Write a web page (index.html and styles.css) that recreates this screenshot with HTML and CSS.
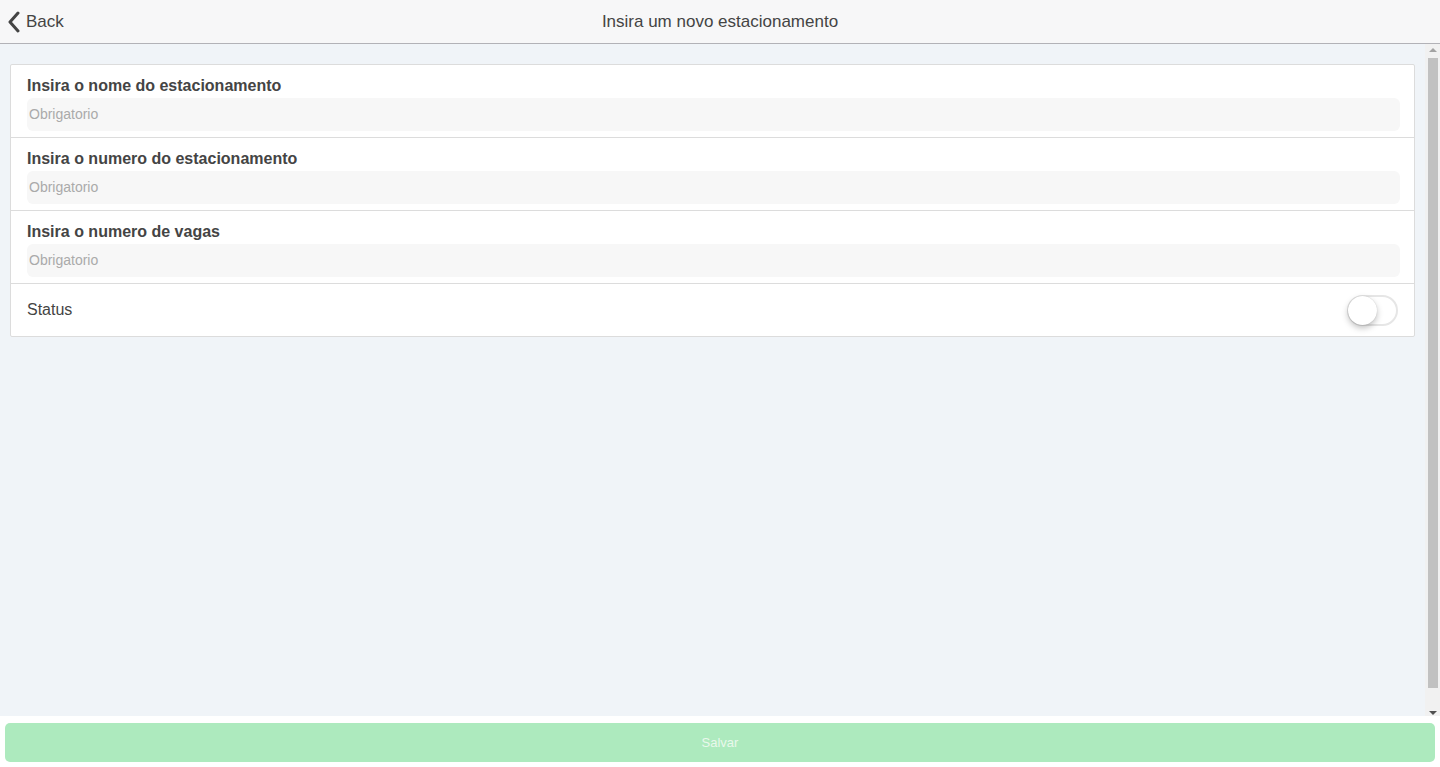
FILE: index.html
```html
<!DOCTYPE html>
<html lang="pt">
<head>
<meta charset="utf-8">
<title>Insira um novo estacionamento</title>
<link rel="stylesheet" href="styles.css">
</head>
<body>
<div class="app">
  <header class="topbar">
    <a class="back" href="#">
      <svg class="back-icon" width="14" height="22" viewBox="0 0 14 22"><path d="M11 2 L3 11 L11 20" fill="none" stroke="#444" stroke-width="3" stroke-linecap="round" stroke-linejoin="round"/></svg>
      <span>Back</span>
    </a>
    <h1 class="title">Insira um novo estacionamento</h1>
  </header>
  <div class="body-row">
    <main class="content">
      <div class="card">
        <div class="field">
          <label class="label">Insira o nome do estacionamento</label>
          <input class="input" type="text" placeholder="Obrigatorio">
        </div>
        <div class="field">
          <label class="label">Insira o numero do estacionamento</label>
          <input class="input" type="text" placeholder="Obrigatorio">
        </div>
        <div class="field">
          <label class="label">Insira o numero de vagas</label>
          <input class="input" type="text" placeholder="Obrigatorio">
        </div>
        <div class="status-row">
          <span class="status-label">Status</span>
          <span class="toggle"><span class="knob"></span></span>
        </div>
      </div>
    </main>
    <div class="scrollbar" aria-hidden="true">
      <span class="arrow-up"></span>
      <span class="thumb"></span>
      <span class="arrow-down"></span>
    </div>
  </div>
  <footer class="footer">
    <button class="save" type="button">Salvar</button>
  </footer>
</div>
</body>
</html>
```
FILE: styles.css
```css
* { box-sizing: border-box; }
html, body { margin: 0; padding: 0; height: 100%; }
body {
  font-family: "Liberation Sans", Arial, sans-serif;
  color: #444;
  background: #fff;
  overflow: hidden;
}
.app {
  display: flex;
  flex-direction: column;
  height: 767px;
}
.topbar {
  flex: 0 0 44px;
  height: 44px;
  background: #f7f7f8;
  border-bottom: 1px solid #b2b2b7;
  display: flex;
  align-items: center;
  justify-content: center;
  position: relative;
}
.back {
  position: absolute;
  left: 7px;
  top: 11px;
  display: flex;
  align-items: center;
  gap: 5px;
  text-decoration: none;
  color: #444;
  font-size: 17px;
}
.back-icon { display: block; }
.title {
  margin: 0;
  font-size: 17px;
  font-weight: normal;
  color: #444;
}
.body-row {
  flex: 1 1 auto;
  display: flex;
  background: #f0f4f8;
  min-height: 0;
}
.content {
  flex: 1 1 auto;
  overflow: hidden;
  padding: 20px 10px 0 10px;
}
.scrollbar {
  flex: 0 0 15px;
  width: 15px;
  background: #f1f1f1;
  display: flex;
  flex-direction: column;
  align-items: center;
  padding: 4px 0 1px 0;
}
.arrow-up {
  width: 0;
  height: 0;
  border-left: 4px solid transparent;
  border-right: 4px solid transparent;
  border-bottom: 4px solid #a3a3a3;
  margin-left: 1px;
}
.thumb {
  width: 10px;
  margin-left: 1px;
  margin-top: 6px;
  height: 630px;
  background: #c1c1c1;
}
.arrow-down {
  width: 0;
  height: 0;
  border-left: 4px solid transparent;
  border-right: 4px solid transparent;
  border-top: 4px solid #505050;
  margin-left: 1px;
  margin-top: auto;
}
.card {
  background: #fff;
  border: 1px solid #dcdcdc;
  border-radius: 2px;
}
.field {
  display: flex;
  flex-direction: column;
  padding: 12px 14px 6px 16px;
  border-bottom: 1px solid #dcdcdc;
  height: 73px;
}
.label {
  font-size: 16px;
  font-weight: bold;
  color: #444;
  line-height: 18px;
  margin-bottom: 3px;
}
.input {
  height: 33px;
  border: none;
  border-radius: 6px;
  background: #f7f7f7;
  font-family: "Liberation Sans", Arial, sans-serif;
  font-size: 14px;
  padding: 0 2px 2px 2px;
  color: #444;
  outline: none;
}
.input::placeholder { color: #aaa; }
.status-row {
  height: 52px;
  display: flex;
  align-items: center;
  justify-content: space-between;
  padding: 0 16px 0 16px;
}
.status-label { font-size: 16px; color: #444; }
.toggle {
  width: 51px;
  height: 31px;
  border: 2px solid #e6e6e6;
  border-radius: 16px;
  background: #fff;
  position: relative;
  display: block;
  margin-top: 1px;
}
.knob {
  position: absolute;
  left: -1px;
  top: -1px;
  width: 29px;
  height: 29px;
  border-radius: 50%;
  background: #fff;
  box-shadow: 0 3px 6px rgba(0,0,0,0.25), 0 0 1px rgba(0,0,0,0.2);
}
.footer {
  flex: 0 0 auto;
  background: #fff;
  padding: 7px 5px 5px 5px;
}
.save {
  width: 100%;
  height: 39px;
  border: none;
  border-radius: 5px;
  background: #adeabe;
  color: #e9f8ec;
  font-family: "Liberation Sans", Arial, sans-serif;
  font-size: 13px;
  display: block;
}
```
